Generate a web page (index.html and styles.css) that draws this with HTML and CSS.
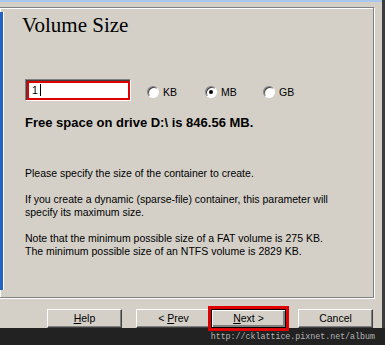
FILE: index.html
```html
<!DOCTYPE html>
<html lang="en">
<head>
  <meta charset="UTF-8">
  <title>Volume Size</title>
  <link rel="stylesheet" href="styles.css">
</head>
<body>

<div class="screen">
  <div class="dialog">
    <div class="top-line"></div>

    <!-- WIZARD PAGE -->
    <div class="panel">
      <div class="side"></div>
      <div class="content">
        <h1>Volume Size</h1>

        <!-- SIZE INPUT + UNITS -->
        <div class="size-row">
          <div class="size-box">
            <div class="field">1<span class="caret"></span></div>
          </div>
          <label class="radio"><span class="dot"></span>KB</label>
          <label class="radio"><span class="dot checked"></span>MB</label>
          <label class="radio"><span class="dot"></span>GB</label>
        </div>

        <p class="free">Free space on drive D:\ is 846.56 MB.</p>

        <p class="note first">Please specify the size of the container to create.</p>
        <p class="note">If you create a dynamic (sparse-file) container, this parameter will<br>specify its maximum size.</p>
        <p class="note">Note that the minimum possible size of a FAT volume is 275 KB.<br>The minimum possible size of an NTFS volume is 2829 KB.</p>
      </div>
    </div>

    <!-- BUTTONS -->
    <div class="buttons">
      <div class="btn help"><u>H</u>elp</div>
      <div class="btn prev">&lt; <u>P</u>rev</div>
      <div class="btn next"><u>N</u>ext &gt;</div>
      <div class="btn cancel">Cancel</div>
    </div>
  </div>
  <div class="edge"></div>
</div>

<div class="band"><span>http://cklattice.pixnet.net/album</span></div>

</body>
</html>
```

FILE: styles.css
```css
/* --- Global --- */
body { margin: 0; width: 385px; height: 345px; overflow: hidden; background: #d4d0c8; font-family: 'Liberation Sans', Arial, sans-serif; color: #000; }
.screen { display: flex; height: 328px; }
.dialog { flex: 1; display: flex; flex-direction: column; }
.edge { width: 3px; background: #3c3c3c; }
.top-line { height: 2px; background: #a9c8ee; }

/* --- Wizard page frame --- */
.panel {
  box-sizing: border-box;
  display: flex;
  width: 375px; height: 291px;
  margin: 5px 0 0 -1px;
  border: 1px solid #808080;
  box-shadow: inset 1px 1px 0 #fff, 1px 1px 0 #fff;
}
.side { width: 3px; height: 278px; margin-top: 4px; background: #2461c4; border-right: 1px solid #fff; }
.content { padding-left: 21px; }

h1 { margin: 5px 0 0 -3px; font: normal 21px/24px 'Liberation Serif', 'Times New Roman', serif; }

/* --- Size input row --- */
.size-row { display: flex; align-items: center; margin-top: 42px; }
.size-box {
  width: 106px; height: 22px; box-sizing: border-box;
  border: 1px solid; border-color: #808080 #fff #fff #808080;
  box-shadow: inset 1px 1px 0 #404040;
  padding: 1px 0 0 1px;
}
.field {
  height: 19px; box-sizing: border-box;
  border: 2px solid #e00000; background: #fff;
  padding: 1px 0 0 3px;
  font-size: 10.5px; line-height: 13px;
}
.caret { display: inline-block; width: 0; height: 12px; border-left: 1px solid #000; margin-left: 2px; vertical-align: -2px; }

.radio { display: flex; align-items: center; gap: 4px; width: 58px; margin-top: 4px; font-size: 10.5px; }
.radio:first-of-type { margin-left: 16px; }
.dot {
  width: 12px; height: 12px; box-sizing: border-box; border-radius: 50%;
  border: 1px solid; border-color: #808080 #fff #fff #808080;
  background: #fff; box-shadow: inset 1px 1px 0 #404040;
  display: grid; place-items: center;
}
.dot.checked::after { content: ""; width: 4px; height: 4px; border-radius: 50%; background: #000; }

/* --- Texts --- */
.free { margin: 14px 0 0; font-weight: bold; font-size: 13px; line-height: 16px; }
.note { margin: 13px 0 0; font-size: 10.5px; line-height: 13px; }
.note.first { margin-top: 36px; }

/* --- Buttons --- */
.buttons { display: flex; margin-top: 11px; }
.btn {
  width: 75px; height: 19px; box-sizing: border-box;
  border: 1px solid; border-color: #fff #404040 #404040 #fff;
  box-shadow: inset -1px -1px 0 #808080;
  text-align: center; font-size: 10.5px; line-height: 15px; padding-top: 1px;
}
.help { margin-left: 47px; }
.prev { margin-left: 14px; }
.next { border-color: #000; box-shadow: inset 1px 1px 0 #fff, inset -2px -2px 0 #808080; outline: 3px solid #e00000; }
.cancel { margin-left: 12px; }

/* --- Watermark band --- */
.band { height: 17px; background: #222; display: flex; justify-content: flex-end; align-items: center; padding-right: 10px; }
.band span { font: 8.3px 'Liberation Mono', monospace; color: #b4b4b4; }
```
